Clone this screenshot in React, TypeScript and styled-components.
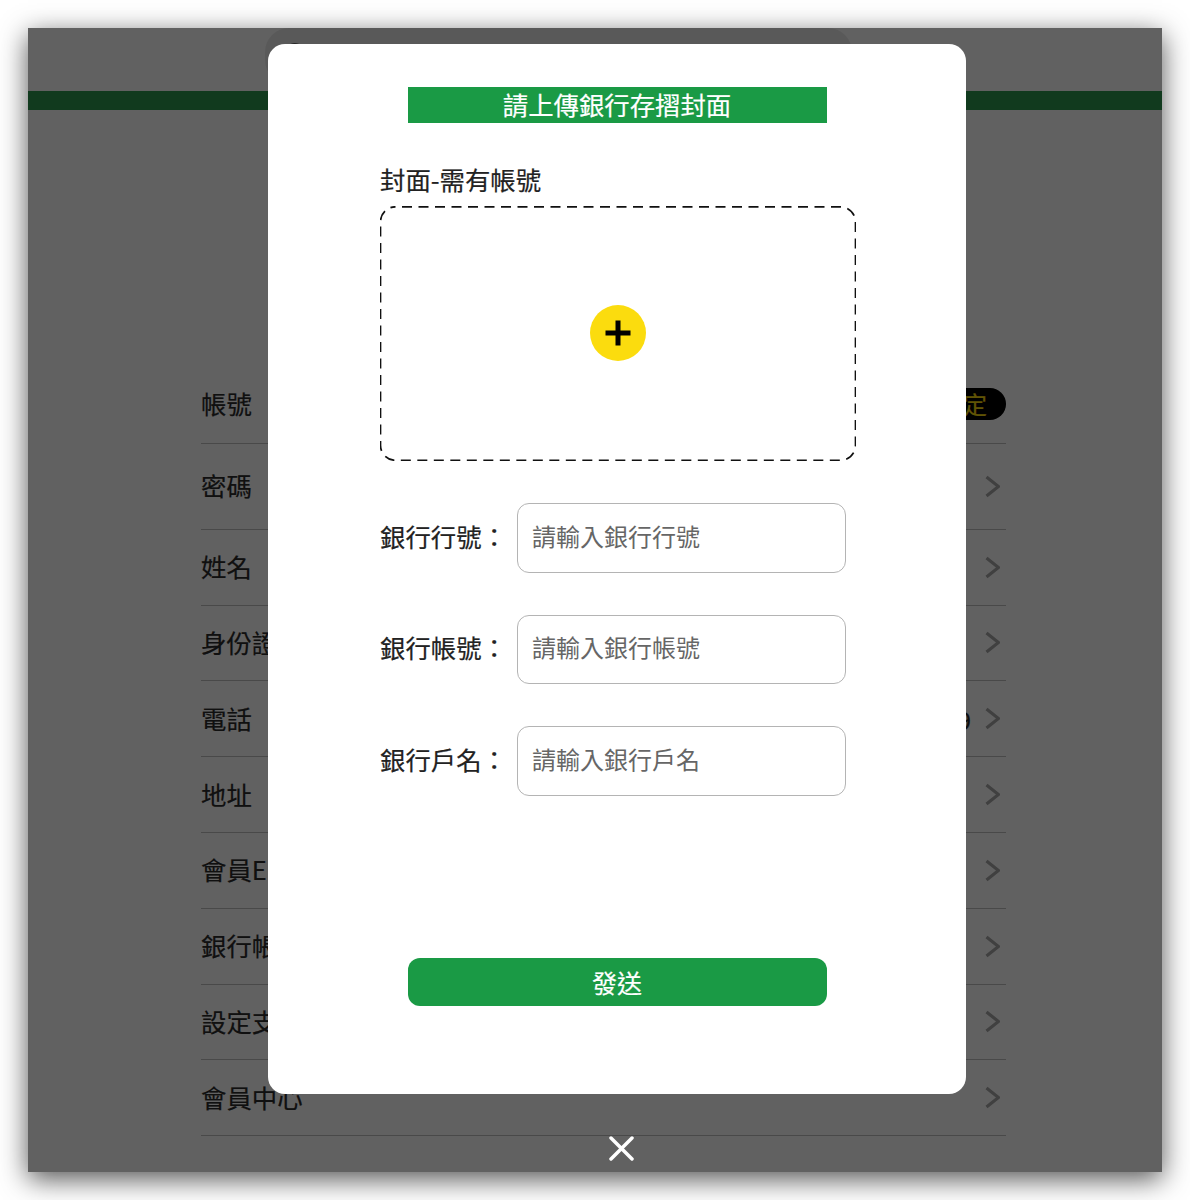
import React from 'react'
import styled, { createGlobalStyle } from 'styled-components';
import { Search } from 'lucide-react';

interface IRow {
    label: string;
    tall?: boolean;
    raised?: boolean;
    value?: string;
    badge?: string;
}

const rows: IRow[] = [
    { label: '帳號', badge: '未設定', raised: true },
    { label: '密碼', tall: true },
    { label: '姓名' },
    { label: '身份證字號' },
    { label: '電話', value: '9' },
    { label: '地址' },
    { label: '會員Email' },
    { label: '銀行帳號' },
    { label: '設定支付密碼' },
    { label: '會員中心' },
];

const fields = [
    { label: '銀行行號', placeholder: '請輸入銀行行號' },
    { label: '銀行帳號', placeholder: '請輸入銀行帳號' },
    { label: '銀行戶名', placeholder: '請輸入銀行戶名' },
];

const App = () => {
    return (
        <>
            <GlobalStyle />
            <Screen>
                <SearchPill>
                    <Search size={30} color="#333" strokeWidth={2.4} />
                    <SearchText>搜尋商品</SearchText>
                </SearchPill>
                <GreenBar />
                <List>
                    {rows.map(row => (
                        <Row key={row.label} $tall={row.tall} $raised={row.raised}>
                            <RowLabel>{row.label}</RowLabel>
                            {row.badge && <Badge>{row.badge}</Badge>}
                            {row.value && <RowValue>{row.value}</RowValue>}
                            {!row.badge && (
                                <Chevron width="15" height="23" viewBox="0 0 15 23">
                                    <polyline points="1.5,2 13.5,11.5 1.5,21" />
                                </Chevron>
                            )}
                        </Row>
                    ))}
                </List>
                <Overlay>
                    <Modal>
                        <Title>請上傳銀行存摺封面</Title>
                        <Form>
                            <CoverLabel>封面-需有帳號</CoverLabel>
                            <DropZone>
                                <DashedFrame>
                                    <rect x="0.5" y="0.8" width="475" height="253.5" rx="15" />
                                </DashedFrame>
                                <AddButton>
                                    <svg width="26" height="26" viewBox="0 0 26 26">
                                        <path d="M0.5 13H25.5M13 0.5V25.5" stroke="#000" strokeWidth="5" />
                                    </svg>
                                </AddButton>
                            </DropZone>
                            <Fields>
                                {fields.map(field => (
                                    <Field key={field.label}>
                                        <FieldLabel>{field.label}：</FieldLabel>
                                        <FieldInput placeholder={field.placeholder} />
                                    </Field>
                                ))}
                            </Fields>
                        </Form>
                        <SendButton>發送</SendButton>
                    </Modal>
                    <CloseButton>
                        <svg width="25" height="25" viewBox="0 0 25 25">
                            <path d="M2 2L23 23M23 2L2 23" stroke="#fff" strokeWidth="3.5" strokeLinecap="round" />
                        </svg>
                    </CloseButton>
                </Overlay>
            </Screen>
        </>
    );
}

const GlobalStyle = createGlobalStyle`
    html, body {
        margin: 0;
        padding: 0;
        background: #fff;
    }
    body {
        font-family: "Noto Sans CJK TC", "Noto Sans", sans-serif;
    }
    #root {
        padding: 28px;
        height: 1200px;
        box-sizing: border-box;
    }
`;

const Screen = styled("div")`
    position: relative;
    width: 1134px;
    height: 1144px;
    overflow: hidden;
    background-color: #fff;
    box-shadow: 0 7px 26px rgba(0, 0, 0, 0.68);
`;

const SearchPill = styled("div")`
    display: flex;
    align-items: center;
    gap: 18px;
    box-sizing: border-box;
    width: 587px;
    height: 56px;
    margin-left: 237px;
    padding-left: 16px;
    background-color: #ebebeb;
    border-radius: 24px;
`;

const SearchText = styled("span")`
    color: #999;
    font-size: 25px;
`;

const GreenBar = styled("div")`
    height: 19px;
    margin-top: 7px;
    background-color: #2f9a50;
`;

const List = styled("ul")`
    list-style: none;
    width: 805px;
    margin: 258px 0 0 173px;
    padding: 0;
`;

const Row = styled("li")<{ $tall?: boolean; $raised?: boolean }>`
    display: flex;
    align-items: center;
    box-sizing: border-box;
    height: ${props => (props.$tall ? '86px' : '75.8px')};
    padding-bottom: ${props => (props.$raised ? '3px' : '0')};
    border-bottom: 1.5px solid #c0c0c0;
    color: #2a2a2a;
    font-size: 25.4px;
    -webkit-text-stroke: 0.2px;
`;

const RowLabel = styled("span")`
    flex: 1;
    padding-bottom: 2px;
`;

const RowValue = styled("span")`
    margin-right: 14px;
`;

const Badge = styled("span")`
    display: flex;
    align-items: center;
    height: 32px;
    padding: 0 19px;
    background-color: #000;
    border-radius: 16px;
    color: #fcdc0e;
    font-size: 24px;
`;

const Chevron = styled("svg")`
    margin-right: 6px;
    fill: none;
    stroke: #a8a8a8;
    stroke-width: 3.2;
`;

const Overlay = styled("div")`
    position: absolute;
    inset: 0;
    display: flex;
    flex-direction: column;
    box-sizing: border-box;
    padding: 16px 0 0 240px;
    background-color: rgba(0, 0, 0, 0.62);
`;

const Modal = styled("div")`
    display: flex;
    flex-direction: column;
    align-items: center;
    box-sizing: border-box;
    width: 698px;
    height: 1050px;
    padding-top: 43px;
    background-color: #fff;
    border-radius: 17px;
`;

const Title = styled("h1")`
    width: 419px;
    height: 36px;
    margin: 0;
    background-color: #1a9a45;
    color: #fff;
    font-size: 25.4px;
    font-weight: 400;
    line-height: 34px;
    text-align: center;
    -webkit-text-stroke: 0.2px;
`;

const Form = styled("div")`
    display: flex;
    flex-direction: column;
    width: 476px;
    margin: 40px 0 0 2px;
`;

const CoverLabel = styled("label")`
    height: 43px;
    color: #222;
    font-size: 25.4px;
    line-height: 32px;
    -webkit-text-stroke: 0.2px;
`;

const DropZone = styled("div")`
    position: relative;
    display: flex;
    align-items: center;
    justify-content: center;
    box-sizing: border-box;
    height: 255px;
    padding: 0 1px 1px 0;
`;

const DashedFrame = styled("svg").attrs({ viewBox: '0 0 476 255' })`
    position: absolute;
    inset: 0;
    width: 476px;
    height: 255px;
    fill: none;
    stroke: #111;
    stroke-width: 1.7;
    stroke-dasharray: 10 6.5;
    stroke-dashoffset: -6.5;
`;

const AddButton = styled("button")`
    display: flex;
    align-items: center;
    justify-content: center;
    width: 56px;
    height: 56px;
    padding: 0;
    background-color: #fbdc0e;
    border: none;
    border-radius: 50%;
    cursor: pointer;
`;

const Fields = styled("div")`
    display: flex;
    flex-direction: column;
    gap: 42px;
    margin-top: 42px;
`;

const Field = styled("div")`
    display: flex;
    align-items: center;
`;

const FieldLabel = styled("label")`
    width: 137px;
    flex-shrink: 0;
    padding-bottom: 4px;
    color: #222;
    font-size: 25.4px;
    -webkit-text-stroke: 0.2px;
`;

const FieldInput = styled("input")`
    box-sizing: border-box;
    width: 329px;
    height: 69.5px;
    padding: 0 14px 5px;
    background: #fff;
    border: 1.5px solid #b4b4b4;
    border-radius: 12px;
    font-family: "Noto Sans CJK TC", "Noto Sans", sans-serif;
    font-size: 24px;
    color: #222;
    outline: none;
    &::placeholder {
        color: #666;
        opacity: 1;
    }
`;

const SendButton = styled("button")`
    width: 419px;
    height: 48px;
    margin-top: 162px;
    padding: 0;
    background-color: #1a9a45;
    border: none;
    border-radius: 12px;
    color: #fff;
    font-family: "Noto Sans CJK TC", "Noto Sans", sans-serif;
    font-size: 25px;
    -webkit-text-stroke: 0.2px;
    cursor: pointer;
`;

const CloseButton = styled("button")`
    display: flex;
    width: 25px;
    height: 25px;
    margin: 42px 0 0 341px;
    padding: 0;
    background: none;
    border: none;
    cursor: pointer;
`;

export default App;
